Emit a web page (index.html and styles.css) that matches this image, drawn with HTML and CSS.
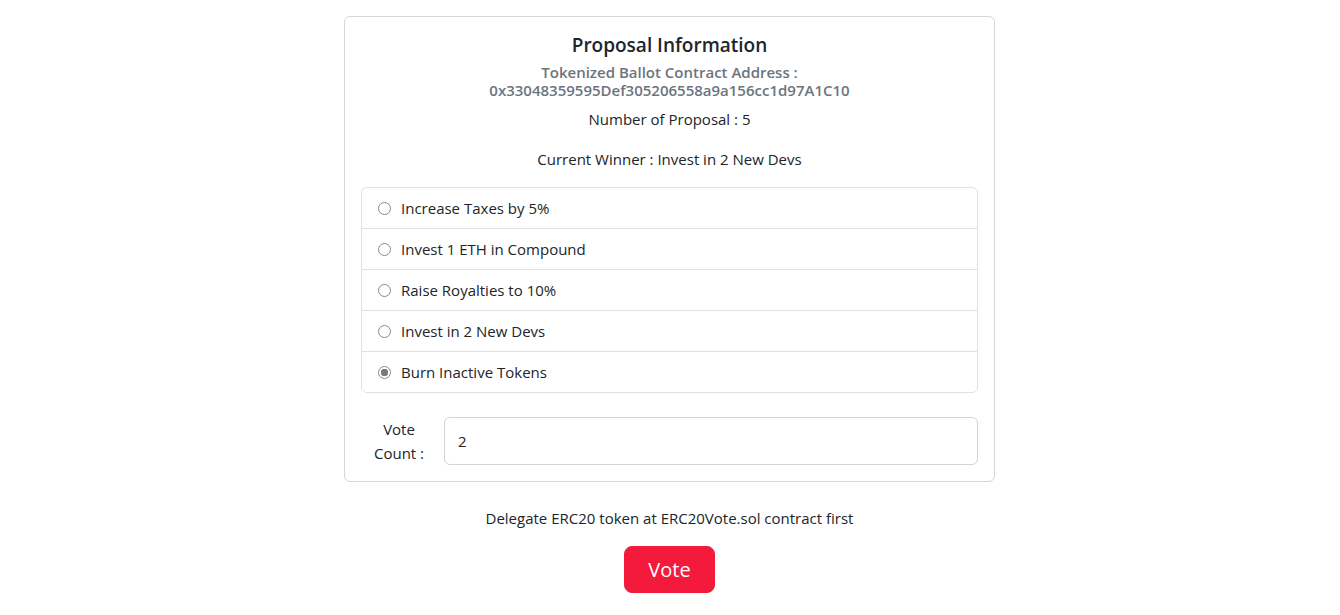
FILE: index.html
```html
<!DOCTYPE html>
<html lang="en">
<head>
<meta charset="utf-8">
<title>Ballot</title>
<link rel="stylesheet" href="styles.css">
</head>
<body>
<main class="page">
  <section class="card">
    <h5 class="card-title">Proposal Information</h5>
    <h6 class="card-subtitle">Tokenized Ballot Contract Address :<br>0x33048359595Def305206558a9a156cc1d97A1C10</h6>
    <p class="info first">Number of Proposal : 5</p>
    <p class="info">Current Winner : Invest in 2 New Devs</p>
    <ul class="list-group">
      <li class="list-item"><span class="radio"></span><span>Increase Taxes by 5%</span></li>
      <li class="list-item"><span class="radio"></span><span>Invest 1 ETH in Compound</span></li>
      <li class="list-item"><span class="radio"></span><span>Raise Royalties to 10%</span></li>
      <li class="list-item"><span class="radio"></span><span>Invest in 2 New Devs</span></li>
      <li class="list-item"><span class="radio checked"></span><span>Burn Inactive Tokens</span></li>
    </ul>
    <div class="vote-row">
      <label class="vote-label">Vote<br>Count :</label>
      <div class="input">2</div>
    </div>
  </section>
  <p class="note">Delegate ERC20 token at ERC20Vote.sol contract first</p>
  <button class="btn-vote">Vote</button>
</main>
</body>
</html>
```
FILE: styles.css
```css
* { box-sizing: border-box; }
html, body { margin: 0; padding: 0; background: #fff; }
body {
  font-family: "Open Sans", "Noto Sans", sans-serif;
  font-size: 15px;
  line-height: 24px;
  color: #212529;
}
.page {
  display: flex;
  flex-direction: column;
  align-items: center;
  padding: 16px 1px 0 0;
}
.card {
  width: 651px;
  border: 1px solid #d6d6d6;
  border-radius: 6px;
  padding: 16px;
  text-align: center;
}
.card-title {
  margin: 0 0 6px;
  font-size: 19px;
  font-weight: 600;
  line-height: 24px;
}
.card-subtitle {
  margin: 0;
  font-size: 15px;
  font-weight: 600;
  line-height: 18px;
  color: #6c757d;
}
.info { margin: 0 0 16px; }
.info.first { margin-top: 8px; }
.list-group {
  list-style: none;
  margin: 0;
  padding: 0;
  border: 1px solid #dee2e6;
  border-radius: 6px;
  text-align: left;
}
.list-item {
  display: flex;
  align-items: center;
  height: 41px;
  padding: 0 16px;
  border-top: 1px solid #dee2e6;
}
.list-item:first-child { border-top: 0; height: 40px; }
.radio {
  width: 13px;
  height: 13px;
  border: 1px solid #8a8a8a;
  border-radius: 50%;
  margin-right: 10px;
  flex: none;
  background: #fff;
}
.radio.checked {
  background: radial-gradient(circle, #7a7a7a 0 3.5px, #fff 4px);
}
.vote-row {
  display: flex;
  align-items: stretch;
  margin-top: 24px;
  gap: 7px;
}
.vote-label {
  width: 76px;
  text-align: center;
  line-height: 24px;
}
.input {
  flex: 1;
  height: 48px;
  border: 1px solid #ced4da;
  border-radius: 6px;
  padding: 0 13px;
  display: flex;
  align-items: center;
  text-align: left;
}
.note {
  margin: 24px 0 16px;
}
.btn-vote {
  font-family: inherit;
  font-size: 20px;
  line-height: 30px;
  color: #fff;
  background: #f31a3b;
  border: 1px solid #f31a3b;
  border-radius: 8px;
  padding: 7px 0;
  width: 91px;
  height: 47px;
}
```
